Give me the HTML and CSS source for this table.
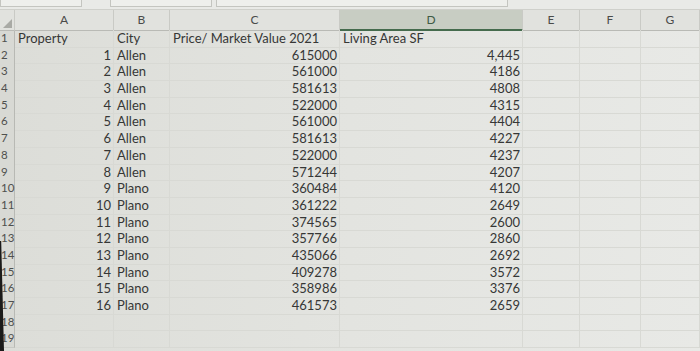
FILE: index.html
```html
<!DOCTYPE html>
<html>
<head>
<meta charset="utf-8">
<link rel="stylesheet" href="styles.css">
</head>
<body>
<div class="sheet">
  <div class="ribbon"><span class="rb rb1"></span><span class="rb rb2"></span><span class="rb rb3"></span></div>
  <div class="row head">
    <div class="corner"><span class="tri"></span></div>
    <div class="ch">A</div><div class="ch">B</div><div class="ch">C</div><div class="ch sel">D</div><div class="ch">E</div><div class="ch">F</div><div class="ch">G</div>
  </div>
  <div class="row"><div class="rn">1</div><div class="c">Property</div><div class="c">City</div><div class="c">Price/ Market Value 2021</div><div class="c">Living Area SF</div><div class="c"></div><div class="c"></div><div class="c"></div></div>
  <div class="row"><div class="rn">2</div><div class="c r">1</div><div class="c">Allen</div><div class="c r">615000</div><div class="c r">4,445</div><div class="c"></div><div class="c"></div><div class="c"></div></div>
  <div class="row"><div class="rn">3</div><div class="c r">2</div><div class="c">Allen</div><div class="c r">561000</div><div class="c r">4186</div><div class="c"></div><div class="c"></div><div class="c"></div></div>
  <div class="row"><div class="rn">4</div><div class="c r">3</div><div class="c">Allen</div><div class="c r">581613</div><div class="c r">4808</div><div class="c"></div><div class="c"></div><div class="c"></div></div>
  <div class="row"><div class="rn">5</div><div class="c r">4</div><div class="c">Allen</div><div class="c r">522000</div><div class="c r">4315</div><div class="c"></div><div class="c"></div><div class="c"></div></div>
  <div class="row"><div class="rn">6</div><div class="c r">5</div><div class="c">Allen</div><div class="c r">561000</div><div class="c r">4404</div><div class="c"></div><div class="c"></div><div class="c"></div></div>
  <div class="row"><div class="rn">7</div><div class="c r">6</div><div class="c">Allen</div><div class="c r">581613</div><div class="c r">4227</div><div class="c"></div><div class="c"></div><div class="c"></div></div>
  <div class="row"><div class="rn">8</div><div class="c r">7</div><div class="c">Allen</div><div class="c r">522000</div><div class="c r">4237</div><div class="c"></div><div class="c"></div><div class="c"></div></div>
  <div class="row"><div class="rn">9</div><div class="c r">8</div><div class="c">Allen</div><div class="c r">571244</div><div class="c r">4207</div><div class="c"></div><div class="c"></div><div class="c"></div></div>
  <div class="row"><div class="rn">10</div><div class="c r">9</div><div class="c">Plano</div><div class="c r">360484</div><div class="c r">4120</div><div class="c"></div><div class="c"></div><div class="c"></div></div>
  <div class="row"><div class="rn">11</div><div class="c r">10</div><div class="c">Plano</div><div class="c r">361222</div><div class="c r">2649</div><div class="c"></div><div class="c"></div><div class="c"></div></div>
  <div class="row"><div class="rn">12</div><div class="c r">11</div><div class="c">Plano</div><div class="c r">374565</div><div class="c r">2600</div><div class="c"></div><div class="c"></div><div class="c"></div></div>
  <div class="row"><div class="rn">13</div><div class="c r">12</div><div class="c">Plano</div><div class="c r">357766</div><div class="c r">2860</div><div class="c"></div><div class="c"></div><div class="c"></div></div>
  <div class="row"><div class="rn">14</div><div class="c r">13</div><div class="c">Plano</div><div class="c r">435066</div><div class="c r">2692</div><div class="c"></div><div class="c"></div><div class="c"></div></div>
  <div class="row"><div class="rn">15</div><div class="c r">14</div><div class="c">Plano</div><div class="c r">409278</div><div class="c r">3572</div><div class="c"></div><div class="c"></div><div class="c"></div></div>
  <div class="row"><div class="rn">16</div><div class="c r">15</div><div class="c">Plano</div><div class="c r">358986</div><div class="c r">3376</div><div class="c"></div><div class="c"></div><div class="c"></div></div>
  <div class="row"><div class="rn">17</div><div class="c r">16</div><div class="c">Plano</div><div class="c r">461573</div><div class="c r">2659</div><div class="c"></div><div class="c"></div><div class="c"></div></div>
  <div class="row"><div class="rn">18</div><div class="c"></div><div class="c"></div><div class="c"></div><div class="c"></div><div class="c"></div><div class="c"></div><div class="c"></div></div>
  <div class="row"><div class="rn">19</div><div class="c"></div><div class="c"></div><div class="c"></div><div class="c"></div><div class="c"></div><div class="c"></div><div class="c"></div></div>
  <div class="bezel"></div>
</div>
</body>
</html>
```
FILE: styles.css
```css
html, body {
  margin: 0;
  padding: 0;
  background: #e2e3df;
}
.sheet {
  position: relative;
  width: 700px;
  height: 351px;
  overflow: hidden;
  font-family: Lato, "Open Sans", sans-serif;
  font-size: 13px;
  color: #363736;
  background: linear-gradient(90deg, #dcddd8 0%, #e3e4e0 50%, #e8e9e6 100%);
}
.ribbon {
  height: 10px;
  display: flex;
  gap: 4px;
  background: #e9eae7;
  border-bottom: 1px solid #cfd0cb;
  box-sizing: border-box;
}
.rb {
  height: 6px;
  border: 1px solid #c4c5c0;
  border-top: none;
  background: #eeefec;
}
.rb1 { width: 80px; }
.rb2 { width: 100px; margin-left: 24px; }
.rb3 { width: 290px; }
.row {
  display: grid;
  grid-template-columns: 15px 99px 56px 170px 183px 57px 61px 1fr;
  height: 16.7px;
  line-height: 16.7px;
}
.row.head {
  height: 20px;
  line-height: 19px;
  background: #e1e2de;
}
.corner {
  position: relative;
  border-right: 1px solid #c9cac5;
  border-bottom: 1px solid #b9bab5;
}
.tri {
  position: absolute;
  right: 2px;
  bottom: 2px;
  width: 0;
  height: 0;
  border-left: 9px solid transparent;
  border-bottom: 9px solid #a9aaa5;
}
.ch {
  text-align: center;
  color: #4a4b49;
  font-size: 12px;
  border-right: 1px solid #c9cac5;
  border-bottom: 1px solid #b9bab5;
}
.ch.sel {
  background: #c8cdc3;
  color: #3f5a45;
  border-bottom: 2px solid #456b4d;
}
.rn {
  font-size: 11.5px;
  color: #4f504e;
  padding-left: 1px;
  background: #d8d9d4;
  border-right: 1px solid #b8b9b4;
  border-bottom: 1px solid #c8c9c4;
  overflow: visible;
  white-space: nowrap;
}
.c {
  padding: 0 3px;
  white-space: nowrap;
  border-right: 1px solid #d8d9d4;
  border-bottom: 1px solid #d8d9d4;
  min-width: 0;
}
.c.r {
  text-align: right;
  padding-right: 2px;
}
.bezel {
  position: absolute;
  left: 0;
  bottom: 0;
  width: 4px;
  height: 110px;
  background: #1b1b1a;
  clip-path: polygon(0 0, 30% 0, 100% 100%, 0 100%);
}
```
